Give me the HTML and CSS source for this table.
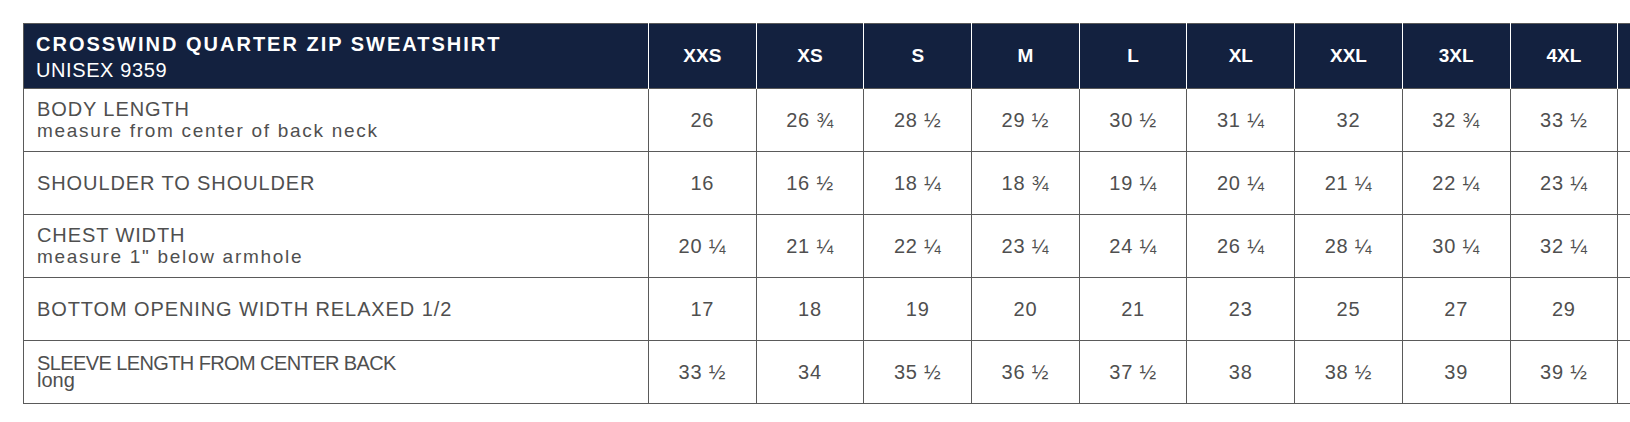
FILE: index.html
```html
<!DOCTYPE html>
<html lang="en">
<head>
<meta charset="utf-8">
<title>Crosswind Quarter Zip Sweatshirt – Size Chart</title>
<link rel="stylesheet" href="styles.css">
</head>
<body>
<div class="page">
  <table class="size-chart">
    <colgroup>
      <col class="col-label">
      <col class="col-size"><col class="col-size"><col class="col-size"><col class="col-size"><col class="col-size">
      <col class="col-size"><col class="col-size"><col class="col-size"><col class="col-size"><col class="col-size">
    </colgroup>
    <thead>
      <tr>
        <th class="title-cell">
          <div class="title">CROSSWIND QUARTER ZIP SWEATSHIRT</div>
          <div class="subtitle">UNISEX 9359</div>
        </th>
        <th>XXS</th><th>XS</th><th>S</th><th>M</th><th>L</th><th>XL</th><th>XXL</th><th>3XL</th><th>4XL</th><th></th>
      </tr>
    </thead>
    <tbody>
      <tr>
        <td class="label spaced two-line"><div>BODY LENGTH</div><div class="note">measure from center of back neck</div></td>
        <td>26</td><td>26 ¾</td><td>28 ½</td><td>29 ½</td><td>30 ½</td><td>31 ¼</td><td>32</td><td>32 ¾</td><td>33 ½</td><td></td>
      </tr>
      <tr>
        <td class="label spaced">SHOULDER TO SHOULDER</td>
        <td>16</td><td>16 ½</td><td>18 ¼</td><td>18 ¾</td><td>19 ¼</td><td>20 ¼</td><td>21 ¼</td><td>22 ¼</td><td>23 ¼</td><td></td>
      </tr>
      <tr>
        <td class="label spaced two-line"><div>CHEST WIDTH</div><div class="note">measure 1" below armhole</div></td>
        <td>20 ¼</td><td>21 ¼</td><td>22 ¼</td><td>23 ¼</td><td>24 ¼</td><td>26 ¼</td><td>28 ¼</td><td>30 ¼</td><td>32 ¼</td><td></td>
      </tr>
      <tr>
        <td class="label spaced">BOTTOM OPENING WIDTH RELAXED 1/2</td>
        <td>17</td><td>18</td><td>19</td><td>20</td><td>21</td><td>23</td><td>25</td><td>27</td><td>29</td><td></td>
      </tr>
      <tr>
        <td class="label tight"><div>SLEEVE LENGTH FROM CENTER BACK</div><div class="plain">long</div></td>
        <td>33 ½</td><td>34</td><td>35 ½</td><td>36 ½</td><td>37 ½</td><td>38</td><td>38 ½</td><td>39</td><td>39 ½</td><td></td>
      </tr>
    </tbody>
  </table>
</div>
</body>
</html>
```
FILE: styles.css
```css
html, body {
  margin: 0;
  padding: 0;
  background: #ffffff;
  overflow: hidden;
}

.page {
  padding: 23px 0 0 23px;
  width: max-content;
}

.size-chart {
  border-collapse: collapse;
  table-layout: fixed;
  width: 1702px;
  font-family: "Liberation Sans", Arial, sans-serif;
  color: #4f4f4f;
}

.col-label { width: 625px; }
.col-size { width: 107.7px; }

.size-chart thead tr { height: 65px; }

.size-chart th {
  background: #13213f;
  color: #ffffff;
  font-weight: bold;
  font-size: 19px;
  text-align: center;
  vertical-align: middle;
  padding: 0;
  border-top: 1px solid #5a5a5a;
  border-left: 1px solid #ffffff;
  border-right: 1px solid #ffffff;
}

.size-chart th.title-cell {
  text-align: left;
  padding: 2px 12px 0;
  border-left: 1px solid #5a5a5a;
}

.title {
  font-size: 20px;
  font-weight: bold;
  letter-spacing: 2px;
  line-height: 26px;
}

.subtitle {
  font-size: 20px;
  font-weight: normal;
  letter-spacing: 0.6px;
  line-height: 26px;
}

.size-chart tbody tr { height: 63px; }

.size-chart td {
  border: 1px solid #5a5a5a;
  padding: 0;
  text-align: center;
  vertical-align: middle;
  font-size: 20px;
  letter-spacing: 0.8px;
}

.size-chart td.label {
  text-align: left;
  padding-left: 13px;
  letter-spacing: 0;
}

.size-chart td.label.spaced { letter-spacing: 0.9px; }
.size-chart td.label.two-line { line-height: 21px; }

.size-chart td.label .note {
  font-size: 19px;
  letter-spacing: 1.7px;
}

.size-chart td.label.tight {
  line-height: 17px;
  letter-spacing: -0.6px;
}

.size-chart td.label .plain { letter-spacing: 0; }
```
